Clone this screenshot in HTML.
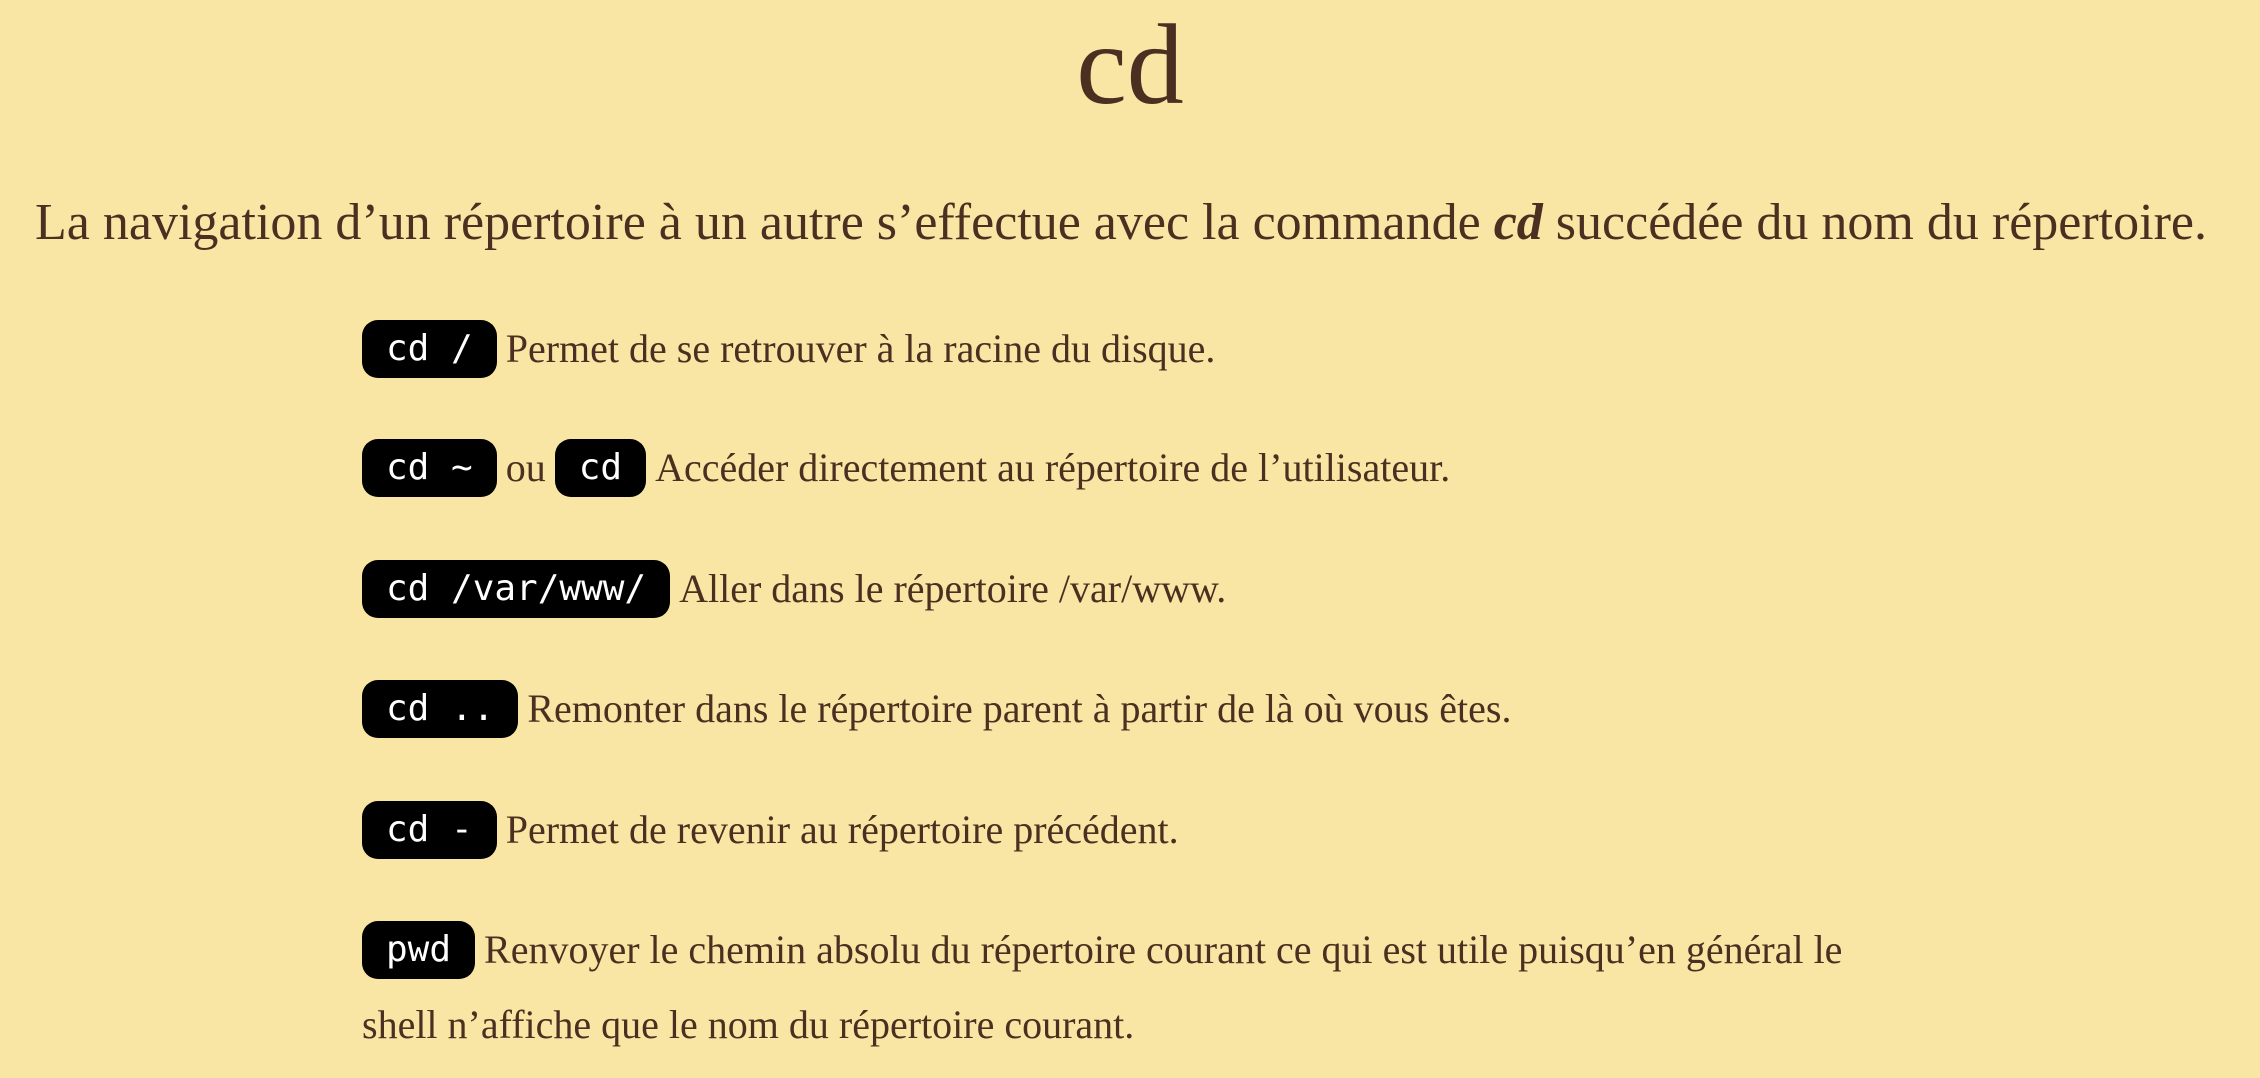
<!DOCTYPE html>
<html><head><meta charset="utf-8"><style>
html,body{margin:0;padding:0}
body{width:2260px;height:1078px;background:#f9e6a4;color:#4b3022;font-family:"Liberation Serif",serif;position:relative;overflow:hidden}
.t{position:absolute;left:0;width:2260px;text-align:center;top:0px;font-size:114px;line-height:130px}
.s{position:absolute;left:0;width:2260px;text-align:center;top:190px;font-size:52px;line-height:66px;white-space:nowrap;transform:translateX(-9px)}
.r{position:absolute;left:362px;height:58px;line-height:58px;font-size:40px;white-space:nowrap;display:flex;align-items:center}
.p{display:inline-block;background:#000;color:#fff;font-family:"DejaVu Sans Mono",monospace;font-size:36px;height:58px;line-height:58px;border-radius:16px;padding:0 24px;margin-right:9px}
.m{margin:0 9px 0 0}
</style></head><body>
<div class="t">cd</div>
<div class="s">La navigation d’un répertoire à un autre s’effectue avec la commande <b><i>cd</i></b> succédée du nom du répertoire.</div>
<div class="r" style="top:320px"><span class="p">cd /</span>Permet de se retrouver à la racine du disque.</div>
<div class="r" style="top:439px"><span class="p">cd ~</span><span class="m">ou</span><span class="p">cd</span>Accéder directement au répertoire de l’utilisateur.</div>
<div class="r" style="top:560px"><span class="p">cd /var/www/</span>Aller dans le répertoire /var/www.</div>
<div class="r" style="top:680px"><span class="p">cd ..</span>Remonter dans le répertoire parent à partir de là où vous êtes.</div>
<div class="r" style="top:801px"><span class="p">cd -</span>Permet de revenir au répertoire précédent.</div>
<div class="r" style="top:921px"><span class="p">pwd</span>Renvoyer le chemin absolu du répertoire courant ce qui est utile puisqu’en général le</div>
<div class="r" style="top:996px">shell n’affiche que le nom du répertoire courant.</div>
</body></html>
